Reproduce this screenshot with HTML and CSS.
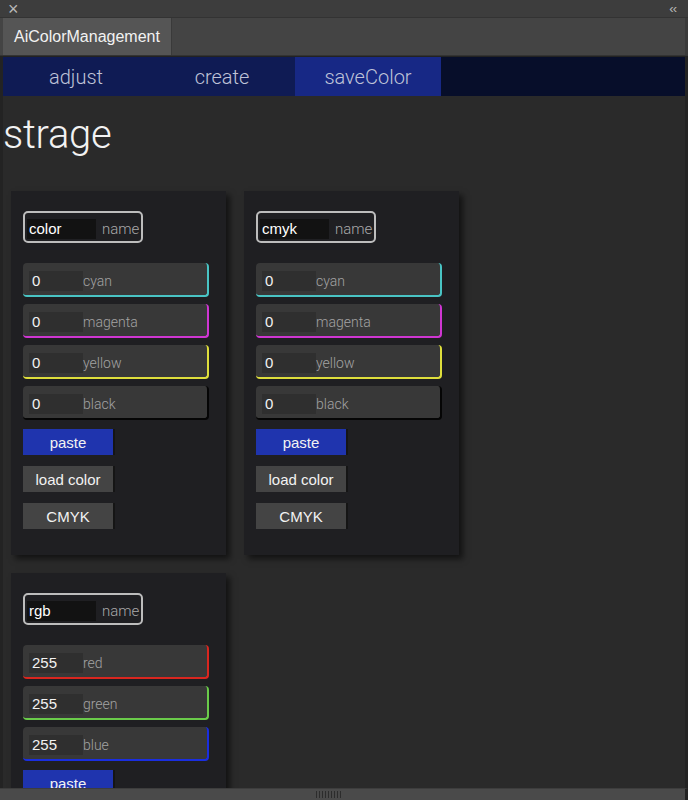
FILE: index.html
```html
<!DOCTYPE html>
<html>
<head>
<meta charset="utf-8">
<link rel="stylesheet" href="styles.css">
</head>
<body>
<div class="window">
  <div class="titlebar">
    <span class="close">×</span>
    <span class="collapse">‹‹</span>
  </div>
  <div class="tabrow">
    <div class="tab">AiColorManagement</div>
  </div>
  <div class="panel">
    <nav class="nav">
      <div class="nav-item">adjust</div>
      <div class="nav-item">create</div>
      <div class="nav-item active">saveColor</div>
      <div class="nav-rest"></div>
    </nav>
    <div class="content">
      <h1 class="heading">strage</h1>
      <div class="cards">
        <div class="card">
          <div class="namefield"><span class="nameinput">color</span><span class="namelabel">name</span></div>
          <div class="rows">
            <div class="row c-cyan"><span class="val">0</span><span class="lbl">cyan</span></div>
            <div class="row c-magenta"><span class="val">0</span><span class="lbl">magenta</span></div>
            <div class="row c-yellow"><span class="val">0</span><span class="lbl">yellow</span></div>
            <div class="row c-black"><span class="val">0</span><span class="lbl">black</span></div>
          </div>
          <div class="buttons">
            <div class="btn primary">paste</div>
            <div class="btn">load color</div>
            <div class="btn">CMYK</div>
          </div>
        </div>
        <div class="card">
          <div class="namefield"><span class="nameinput">cmyk</span><span class="namelabel">name</span></div>
          <div class="rows">
            <div class="row c-cyan"><span class="val">0</span><span class="lbl">cyan</span></div>
            <div class="row c-magenta"><span class="val">0</span><span class="lbl">magenta</span></div>
            <div class="row c-yellow"><span class="val">0</span><span class="lbl">yellow</span></div>
            <div class="row c-black"><span class="val">0</span><span class="lbl">black</span></div>
          </div>
          <div class="buttons">
            <div class="btn primary">paste</div>
            <div class="btn">load color</div>
            <div class="btn">CMYK</div>
          </div>
        </div>
        <div class="card">
          <div class="namefield"><span class="nameinput">rgb</span><span class="namelabel">name</span></div>
          <div class="rows">
            <div class="row c-red"><span class="val">255</span><span class="lbl">red</span></div>
            <div class="row c-green"><span class="val">255</span><span class="lbl">green</span></div>
            <div class="row c-blue"><span class="val">255</span><span class="lbl">blue</span></div>
          </div>
          <div class="buttons">
            <div class="btn primary">paste</div>
            <div class="btn">load color</div>
            <div class="btn">RGB</div>
          </div>
        </div>
      </div>
    </div>
  </div>
  <div class="scrollbar"><span class="grip"></span></div>
</div>
</body>
</html>
```
FILE: styles.css
```css
* { box-sizing: border-box; }
html, body { margin: 0; padding: 0; background: #2a2a2a; }
body { font-family: "Liberation Sans", Arial, sans-serif; }

.window {
  width: 688px;
  height: 800px;
  display: flex;
  flex-direction: column;
  background: #2a2a2a;
  overflow: hidden;
}

.titlebar {
  height: 18px;
  flex: none;
  background: #3d3d3d;
  border-bottom: 1px solid #333;
  display: flex;
  align-items: center;
  justify-content: space-between;
  padding: 0 12px 0 8px;
  color: #b8b8b8;
}
.close { font-size: 18px; line-height: 18px; }
.collapse { font-size: 13px; letter-spacing: -1px; line-height: 18px; }

.tabrow {
  height: 38px;
  flex: none;
  background: #444;
  padding-left: 3px;
  border-right: 3px solid #3a3a3a;
  border-bottom: 1px solid #333;
  display: flex;
}
.tab {
  width: 169px;
  background: #555;
  color: #f2f2f2;
  font-family: "Liberation Sans", sans-serif;
  font-size: 16px;
  display: flex;
  align-items: center;
  justify-content: center;
  padding-top: 1px;
  border-right: 1px solid #3a3a3a;
}

.panel {
  flex: 1;
  display: flex;
  flex-direction: column;
  border-left: 3px solid #232323;
  border-right: 3px solid #232323;
  overflow: hidden;
  min-height: 0;
}

.nav {
  height: 40px;
  flex: none;
  display: flex;
  background: #0f1b54;
  border-top: 1px solid #222;
}
.nav-item {
  width: 146px;
  display: flex;
  align-items: center;
  justify-content: center;
  color: #bfc3d8;
  font-family: "Roboto", "Liberation Sans", sans-serif;
  font-weight: 300;
  font-size: 20px;
}
.nav-item.active { background: #172885; }
.nav-rest { flex: 1; background: #070e2a; }

.content {
  flex: 1;
  min-height: 0;
  overflow: hidden;
}

.heading {
  margin: 14px 0 0 0;
  height: 81px;
  font-family: "Roboto", "Liberation Sans", sans-serif;
  font-weight: 300;
  font-size: 40px;
  line-height: 50px;
  color: #f2f2f2;
  letter-spacing: -0.3px;
}

.cards {
  display: flex;
  flex-wrap: wrap;
  gap: 18px 18px;
  padding-left: 8px;
  width: 500px;
}

.card {
  width: 215px;
  background: #1f1f22;
  box-shadow: 4px 4px 6px rgba(0, 0, 0, 0.55);
  padding: 20px 17px 26px 12px;
}

.namefield {
  width: 120px;
  height: 32px;
  border: 2px solid #bdbdbd;
  border-radius: 5px;
  display: flex;
  align-items: center;
  padding: 3px 0 0 2px;
}
.nameinput {
  width: 69px;
  height: 20px;
  background: #121212;
  color: #fff;
  font-size: 15px;
  line-height: 20px;
  padding-left: 2px;
}
.namelabel {
  margin-left: 6px;
  color: #a9a9a9;
  font-family: "Roboto", "Liberation Sans", sans-serif;
  font-weight: 300;
  font-size: 15px;
}

.rows {
  margin-top: 20px;
  display: flex;
  flex-direction: column;
  gap: 7px;
}
.row {
  height: 34px;
  background: #383838;
  border-radius: 4px;
  border-right: 2px solid #000;
  border-bottom: 2px solid #000;
  display: flex;
  align-items: center;
  padding-left: 6px;
  padding-top: 3px;
}
.val {
  width: 54px;
  height: 20px;
  background: #2f2f2f;
  color: #f2f2f2;
  font-size: 15px;
  line-height: 20px;
  padding-left: 3px;
}
.lbl {
  color: #a3a3a3;
  font-family: "Roboto", "Liberation Sans", sans-serif;
  font-weight: 300;
  font-size: 14px;
}
.c-cyan { border-color: #49c4c4; }
.c-magenta { border-color: #cf36d2; }
.c-yellow { border-color: #dede3c; }
.c-black { border-color: #050505; }
.c-red { border-color: #d9261f; }
.c-green { border-color: #6acb4a; }
.c-blue { border-color: #1a2ee0; }

.buttons {
  margin-top: 9px;
  display: flex;
  flex-direction: column;
  gap: 11px;
}
.btn {
  width: 92px;
  height: 26px;
  background: #444;
  border-right: 2px solid #151515;
  color: #f2f2f2;
  font-size: 15px;
  display: flex;
  align-items: center;
  justify-content: center;
  padding-top: 1px;
}
.btn.primary { background: #1f34ae; }

.scrollbar {
  height: 12px;
  flex: none;
  background: #4a4a4a;
  border-top: 1px solid #3d3d3d;
  border-right: 3px solid #232323;
  display: flex;
  justify-content: center;
  align-items: center;
}
.grip {
  width: 26px;
  height: 7px;
  background: repeating-linear-gradient(90deg, #2c2c2c 0 1px, transparent 1px 3px);
  margin-left: -28px;
}
```
